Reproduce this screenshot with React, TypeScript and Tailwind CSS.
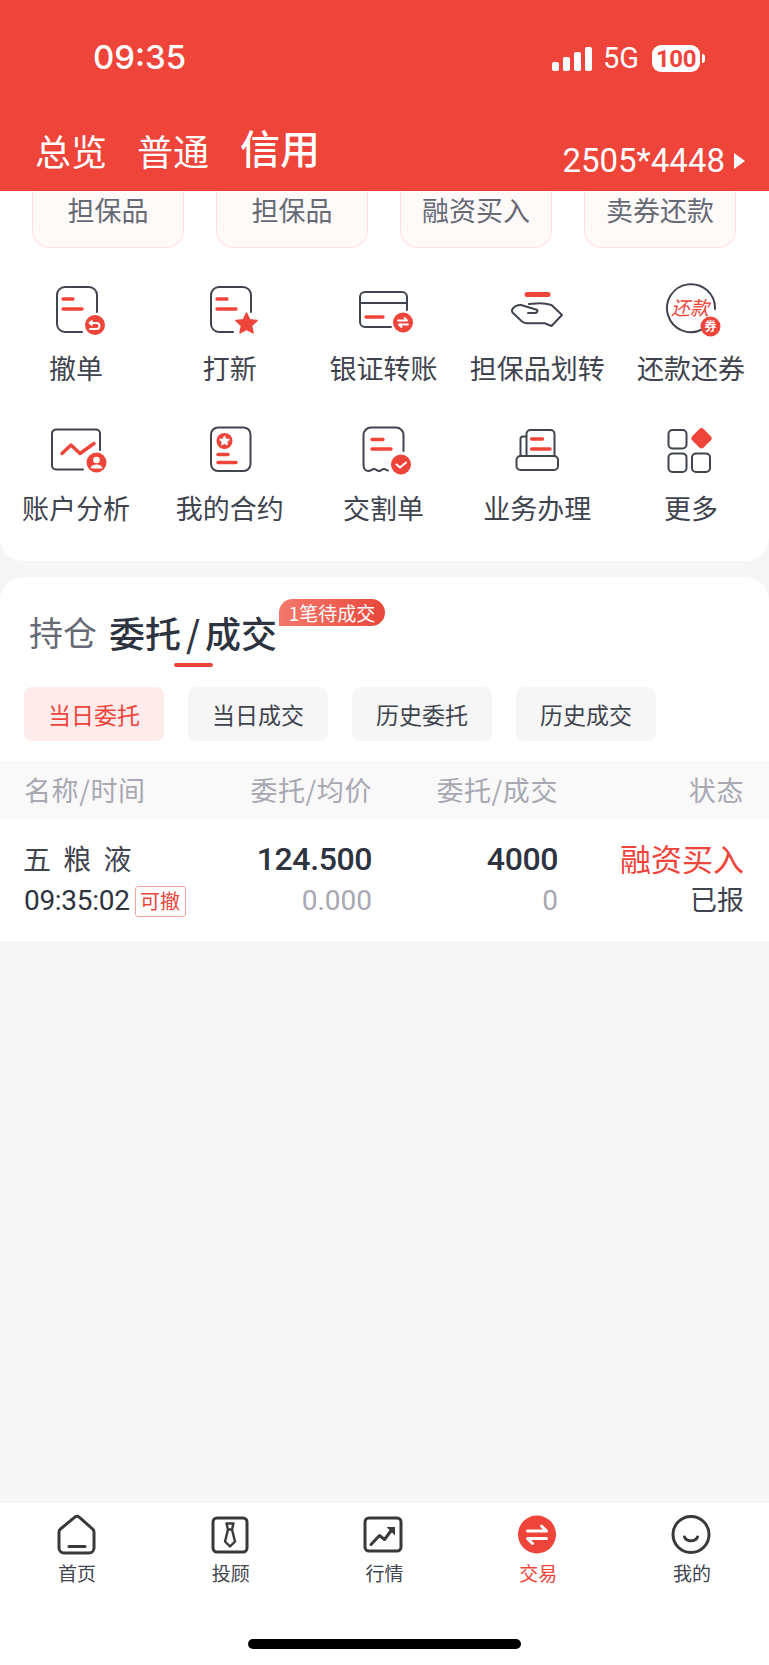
import React from 'react';

const RED = '#ef443a';
const INK = '#3f444f';

// 图标外框，中心对齐每一列
const Glyph = ({ children, row2 }: { children: React.ReactNode; row2?: boolean }) => (
  <svg width="64" height="56" viewBox={row2 ? '0 -2 64 56' : '0 0 64 56'} fill="none" strokeLinecap="round" strokeLinejoin="round">
    {children}
  </svg>
);

const Lines = ({ x, y1, y2, a, b }: { x: number; y1: number; y2: number; a: number; b: number }) => (
  <g stroke={RED} strokeWidth="3.4">
    <path d={`M${x} ${y1}H${x + a}`} />
    <path d={`M${x} ${y2}H${x + b}`} />
  </g>
);

const Star = ({ cx, cy, r, fill }: { cx: number; cy: number; r: number; fill: string }) => {
  const pts: string[] = [];
  for (let i = 0; i < 10; i++) {
    const rad = i % 2 === 0 ? r : r * 0.48;
    const a = (Math.PI / 5) * i - Math.PI / 2;
    pts.push(`${(cx + rad * Math.cos(a)).toFixed(1)},${(cy + rad * Math.sin(a)).toFixed(1)}`);
  }
  return <polygon points={pts.join(' ')} fill={fill} stroke={fill} strokeWidth="1.5" />;
};

const tools: { label: string; icon: React.ReactNode }[] = [
  {
    label: '撤单',
    icon: (
      <Glyph>
        <path d="M37 49H20a8 8 0 0 1-8-8V12a8 8 0 0 1 8-8h24a8 8 0 0 1 8 8v17" stroke={INK} strokeWidth="2" />
        <Lines x={18} y1={16} y2={26} a={10} b={19} />
        <circle cx="50" cy="42" r="10" fill={RED} />
        <path d="M47 38l-2.500 2 2.500 2M45 40h6.500a2.500 2.500 0 0 1 0 6H45" stroke="#fff" strokeWidth="1.8" />
      </Glyph>
    ),
  },
  {
    label: '打新',
    icon: (
      <Glyph>
        <path d="M34 49H20a8 8 0 0 1-8-8V12a8 8 0 0 1 8-8h24a8 8 0 0 1 8 8v17" stroke={INK} strokeWidth="2" />
        <Lines x={18} y1={16} y2={26} a={10} b={19} />
        <Star cx={47.5} cy={41} r={11} fill={RED} />
      </Glyph>
    ),
  },
  {
    label: '银证转账',
    icon: (
      <Glyph>
        <path d="M39 44H13a5 5 0 0 1-5-5V14a5 5 0 0 1 5-5h37a5 5 0 0 1 5 5v13M8 20h47" stroke={INK} strokeWidth="2" />
        <path d="M14 34H31" stroke={RED} strokeWidth="3.4" />
        <circle cx="51" cy="39.500" r="10" fill={RED} />
        <path d="M46 37.500h9l-2.500-2.500M56 41.500h-9l2.500 2.500" stroke="#fff" strokeWidth="1.8" />
      </Glyph>
    ),
  },
  {
    label: '担保品划转',
    icon: (
      <Glyph>
        <path d="M21 11.500H42" stroke={RED} strokeWidth="5" />
        <path d="M6 27C7 24 12 21.500 15 22L30 26.500C32.500 27.500 31.500 30 29 30H22" stroke={INK} strokeWidth="2" />
        <path d="M23 21L30 20.500C36 20 42 21 45.500 22L56 32L45.500 43L38.700 40.300H21C19 40.300 18 40 16 38.500L6.500 29.500C6 28.500 6 28 6 27" stroke={INK} strokeWidth="2" />
      </Glyph>
    ),
  },
  {
    label: '还款还券',
    icon: (
      <Glyph>
        <path d="M42 46.500A24 24 0 1 1 55 26" stroke={INK} strokeWidth="2" />
        <text x="30" y="32" textAnchor="middle" fontSize="19" fill={RED} fontStyle="italic" fontFamily="'Noto Sans CJK SC', sans-serif">还款</text>
        <circle cx="50.500" cy="43.500" r="10" fill={RED} />
        <text x="50.500" y="48" textAnchor="middle" fontSize="12" fontWeight="700" fill="#fff" fontFamily="'Noto Sans CJK SC', sans-serif">券</text>
      </Glyph>
    ),
  },
  {
    label: '账户分析',
    icon: (
      <Glyph row2>
        <path d="M38 44.500H11a4 4 0 0 1-4-4V8.500a4 4 0 0 1 4-4h40a4 4 0 0 1 4 4V25" stroke={INK} strokeWidth="2" />
        <path d="M17 28.500L26 20l9 8.500L49 18.500" stroke={RED} strokeWidth="3.4" />
        <circle cx="51.500" cy="37.500" r="10" fill={RED} />
        <circle cx="51.500" cy="35" r="3.300" fill="#fff" />
        <path d="M45.500 43.500c.5-3 3-4 6-4s5.500 1 6 4z" fill="#fff" />
      </Glyph>
    ),
  },
  {
    label: '我的合约',
    icon: (
      <Glyph row2>
        <rect x="12" y="2.500" width="39.500" height="43.500" rx="7" stroke={INK} strokeWidth="2" />
        <circle cx="25.500" cy="16" r="8" fill={RED} />
        <Star cx={25.5} cy={16} r={4.5} fill="#fff" />
        <Lines x={19} y1={29.5} y2={37.5} a={10} b={18} />
      </Glyph>
    ),
  },
  {
    label: '交割单',
    icon: (
      <Glyph row2>
        <path d="M11.500 10a7.500 7.500 0 0 1 7.500-7.500h25a7.500 7.500 0 0 1 7.500 7.500v16M11.500 10v30c0 3.500 2 6 5 6 3 0 3-2 5.500-2s2.500 2 5 2 2.500-2 5-2c1.500 0 2.500 1 4 1.500" stroke={INK} strokeWidth="2" />
        <Lines x={20} y1={14.5} y2={24} a={11} b={19} />
        <circle cx="49" cy="39.500" r="10" fill={RED} />
        <path d="M44.500 39.500l3.500 3 6-5" stroke="#fff" strokeWidth="2" />
      </Glyph>
    ),
  },
  {
    label: '业务办理',
    icon: (
      <Glyph row2>
        <path d="M14.500 31V14a2.500 2.500 0 0 1 2.500-2.500h3.500M20.500 31V9a4 4 0 0 1 4-4h20a4 4 0 0 1 4 4v22" stroke={INK} strokeWidth="2" />
        <rect x="10.500" y="31" width="41.500" height="14" rx="4" stroke={INK} strokeWidth="2" />
        <Lines x={25.5} y1={14} y2={24} a={11} b={18.5} />
      </Glyph>
    ),
  },
  {
    label: '更多',
    icon: (
      <Glyph row2>
        <rect x="8.500" y="5" width="18" height="18.500" rx="4" stroke={INK} strokeWidth="2" />
        <rect x="8.500" y="28.500" width="18" height="18.500" rx="4" stroke={INK} strokeWidth="2" />
        <rect x="32" y="28.500" width="18" height="18.500" rx="4" stroke={INK} strokeWidth="2" />
        <rect x="33.500" y="5.300" width="16" height="16" rx="3" fill={RED} transform="rotate(45 41.500 13.300)" />
      </Glyph>
    ),
  },
];

const NavSvg = ({ children }: { children: React.ReactNode }) => (
  <svg width="44" height="42" viewBox="0 0 44 42" fill="none" strokeLinecap="round" strokeLinejoin="round">
    {children}
  </svg>
);

const NAV = '#38393d';

const navItems: { label: string; active?: boolean; icon: React.ReactNode }[] = [
  {
    label: '首页',
    icon: (
      <NavSvg>
        <path d="M19.500 3.300L5.500 15a4 4 0 0 0-1.500 3V34a5 5 0 0 0 5 5h25a5 5 0 0 0 5-5V18a4 4 0 0 0-1.500-3L24.500 3.300a4 4 0 0 0-5 0z" stroke={NAV} strokeWidth="3" />
        <path d="M14 32.500h16" stroke={NAV} strokeWidth="3" />
      </NavSvg>
    ),
  },
  {
    label: '投顾',
    icon: (
      <NavSvg>
        <rect x="4" y="4" width="34" height="34" rx="4" stroke={NAV} strokeWidth="3" />
        <path d="M17.500 9.500h7l-1.500 6h-4zM19 15.500l-3 12 5 5 5-5-3-12" stroke={NAV} strokeWidth="2.400" />
      </NavSvg>
    ),
  },
  {
    label: '行情',
    icon: (
      <NavSvg>
        <rect x="3" y="4" width="36" height="33" rx="4" stroke={NAV} strokeWidth="3" />
        <path d="M9 30.500l8.500-9 5 4L30 15.500" stroke={NAV} strokeWidth="3" />
        <path d="M24.500 13H33V21.500z" fill={NAV} />
      </NavSvg>
    ),
  },
  {
    label: '交易',
    active: true,
    icon: (
      <NavSvg>
        <circle cx="21" cy="20.500" r="19" fill={RED} />
        <path d="M11.500 17h19l-5-5M30.500 24.500h-19l5 5" stroke="#fff" strokeWidth="3" />
      </NavSvg>
    ),
  },
  {
    label: '我的',
    icon: (
      <NavSvg>
        <circle cx="21" cy="20.500" r="18" stroke={NAV} strokeWidth="3" />
        <path d="M14.500 23c2 5 11 5 13 0" stroke={NAV} strokeWidth="3" />
      </NavSvg>
    ),
  },
];

const Battery = () => (
  <div className="flex items-center">
    <div className="flex h-[27px] w-[48px] items-center justify-center rounded-[9px] bg-white text-[24px] font-bold leading-none tracking-[-0.5px] text-[#ef443a] font-['Roboto',sans-serif]">
      100
    </div>
    <div className="ml-[2px] h-[9px] w-[3px] rounded-r-full bg-white" />
  </div>
);

const Signal = () => (
  <div className="flex h-[24px] items-end gap-[4px]">
    <div className="h-[9px] w-[7px] rounded-[2px] bg-white" />
    <div className="h-[14px] w-[7px] rounded-[2px] bg-white" />
    <div className="h-[19px] w-[7px] rounded-[2px] bg-white" />
    <div className="h-[24px] w-[7px] rounded-[2px] bg-white" />
  </div>
);

export default function App() {
  return (
    <div className="flex h-[1665px] w-[769px] flex-col overflow-hidden bg-[#f6f6f6] font-['Noto_Sans_CJK_SC',sans-serif] text-[#2e3340]">
      <header className="h-[191px] shrink-0 bg-[#ef443a] text-white">
        <div className="flex h-[120px] items-start pl-[93px] pr-[64px] pt-[39px]">
          <div className="text-[33px] font-medium leading-[36px] font-['Inter',sans-serif]">09:35</div>
          <div className="ml-auto mt-[6px] flex items-center">
            <Signal />
            <div className="ml-[11px] mr-[13px] text-[29px] leading-[27px] font-['Roboto',sans-serif]">5G</div>
            <Battery />
          </div>
        </div>
        <div className="flex h-[71px] items-end pb-[19px] pl-[35px] pr-[24px]">
          <div className="text-[36px] leading-[44px]">总览</div>
          <div className="ml-[30px] text-[36px] leading-[44px]">普通</div>
          <div className="ml-[31px] text-[40px] font-medium leading-[50px]">信用</div>
          <div className="relative top-[7px] ml-auto flex items-center">
            <span className="text-[33px] leading-[36px] font-['Roboto',sans-serif]">2505*4448</span>
            <span className="ml-[9px] h-0 w-0 border-y-[8px] border-l-[11px] border-y-transparent border-l-white" />
          </div>
        </div>
      </header>

      <section className="shrink-0 rounded-b-[24px] bg-white pb-[34px]">
        <div className="flex gap-[32px] pl-[32px]">
          {['担保品', '担保品', '融资买入', '卖券还款'].map((t, i) => (
            <div
              key={i}
              className="flex h-[57px] w-[152px] justify-center rounded-b-[18px] border-x border-b border-[#fde0e0] bg-[#fffafa] pt-[1px] text-[27px] leading-[36px] text-[#666a75]"
            >
              {t}
            </div>
          ))}
        </div>
        <div className="mt-[35px] grid grid-cols-5 gap-y-[36px]">
          {tools.map((t) => (
            <div key={t.label} className="flex flex-col items-center">
              {t.icon}
              <div className="mr-[2px] mt-[10px] whitespace-nowrap text-[27px] leading-[38px] text-[#3f444f]">{t.label}</div>
            </div>
          ))}
        </div>
      </section>

      <main className="mt-[16px] flex-1 bg-[#f6f6f6]">
        <div className="rounded-t-[24px] bg-white">
          <div className="relative h-[110px] pl-[29px] pt-[31px]">
            <div className="flex items-center">
              <span className="text-[34px] leading-[48px] text-[#666a75]">持仓</span>
              <span className="ml-[12px] text-[36px] font-medium leading-[48px] text-[#2e3340]">委托</span>
              <span className="px-[5px] text-[36px] font-medium leading-[48px] text-[#2e3340]">/</span>
              <span className="text-[36px] font-medium leading-[48px] text-[#2e3340]">成交</span>
            </div>
            <div className="absolute left-[174px] top-[86px] h-[4px] w-[39px] rounded-full bg-[#ef443a]" />
            <div className="absolute left-[279px] top-[22px] flex h-[27px] w-[106px] items-center justify-center rounded-t-[14px] rounded-br-[14px] bg-gradient-to-r from-[#f4776a] to-[#e9473c] text-[19px] leading-none text-white">
              1笔待成交
            </div>
          </div>
          <div className="flex gap-[24px] pl-[24px]">
            {['当日委托', '当日成交', '历史委托', '历史成交'].map((t, i) => (
              <div
                key={t}
                className={`flex h-[54px] w-[140px] items-center justify-center rounded-[8px] text-[23px] ${
                  i === 0 ? 'bg-[#fdeceb] text-[#ef443a]' : 'bg-[#f6f6f6] text-[#3f444f]'
                }`}
              >
                {t}
              </div>
            ))}
          </div>
          <div className="mt-[20px] grid h-[58px] grid-cols-[162px_186px_186px_186px] items-center bg-[#f9f9f9] pl-[24px] text-[27px] tracking-[0.6px] text-[#a8a8b3]">
            <div>名称/时间</div>
            <div className="text-right">委托/均价</div>
            <div className="text-right">委托/成交</div>
            <div className="text-right">状态</div>
          </div>
          <div className="grid h-[122px] grid-cols-[162px_186px_186px_186px] bg-white pl-[24px] pt-[19px]">
            <div>
              <div className="-ml-[1px] h-[45px] whitespace-nowrap text-[28px] leading-[40px] tracking-[3px] text-[#3f444f]">五 粮 液</div>
              <div className="flex items-center">
                <span className="text-[28px] leading-[36px] tracking-[-0.3px] text-[#2e3340] font-['Roboto',sans-serif]">09:35:02</span>
                <span className="ml-[5px] flex h-[31px] w-[51px] items-center justify-center rounded-[3px] border border-[#f6a8a0] text-[20px] leading-none text-[#ef443a]">
                  可撤
                </span>
              </div>
            </div>
            <div className="text-right font-['Roboto',sans-serif]">
              <div className="h-[45px] text-[32px] font-medium leading-[42px] tracking-[-0.4px] text-[#2e3340]">124.500</div>
              <div className="text-[28px] leading-[36px] text-[#a8a8b3]">0.000</div>
            </div>
            <div className="text-right font-['Roboto',sans-serif]">
              <div className="h-[45px] text-[32px] font-medium leading-[42px] tracking-[-0.4px] text-[#2e3340]">4000</div>
              <div className="text-[28px] leading-[36px] text-[#a8a8b3]">0</div>
            </div>
            <div className="text-right">
              <div className="h-[43px] whitespace-nowrap text-[31px] leading-[40px] text-[#ef443a]">融资买入</div>
              <div className="text-[27px] leading-[36px] text-[#3f444f]">已报</div>
            </div>
          </div>
        </div>
      </main>

      <nav className="relative h-[162px] shrink-0 bg-white">
        <div className="grid grid-cols-5 pt-[11px]">
          {navItems.map((n) => (
            <div key={n.label} className="flex flex-col items-center">
              {n.icon}
              <div className={`mt-[3px] text-[19px] leading-[28px] ${n.active ? 'text-[#ef443a]' : 'text-[#3f444f]'}`}>{n.label}</div>
            </div>
          ))}
        </div>
        <div className="absolute bottom-[16px] left-[248px] h-[10px] w-[273px] rounded-full bg-black" />
      </nav>
    </div>
  );
}
